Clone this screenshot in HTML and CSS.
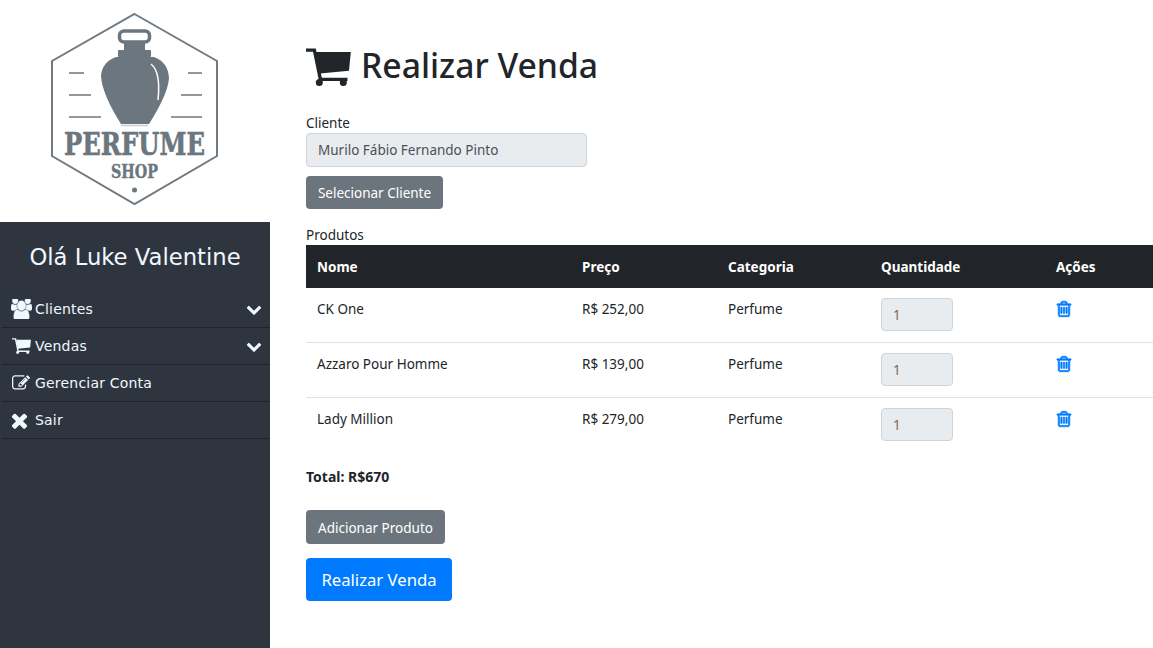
FILE: index.html
```html
<!DOCTYPE html>
<html lang="pt-BR">
<head>
<meta charset="utf-8">
<title>Realizar Venda</title>
<link rel="stylesheet" href="styles.css">
</head>
<body>
<svg class="defs" width="0" height="0" aria-hidden="true">
  <symbol id="i-cart" viewBox="0 0 45 38" preserveAspectRatio="none"><path d="M0 .5H9.800L15.800 29.700H41.500V33H13L7 3.700H0Z"/><path d="M10 4H44.800L43 22.700L14 25.500Z"/><circle cx="13.300" cy="34.500" r="3.500"/><circle cx="37.300" cy="34.500" r="3.500"/></symbol>
  <symbol id="i-users" viewBox="0 120 1920 1560" preserveAspectRatio="none"><path d="M593 896q-162 5-265 128h-134q-82 0-138-40.500t-56-118.500q0-353 124-353 6 0 43.500 21t97.500 42.500 119 21.500q67 0 133-23-5 37-5 66 0 139 81 256zm1071 637q0 120-73 189.500t-194 69.500h-874q-121 0-194-69.500t-73-189.500q0-53 3.500-103.500t14-109 26.500-108.500 43-97.500 62-81 85.500-53.500 111.500-20q10 0 43 21.500t73 48 107 48 135 21.500 135-21.500 107-48 73-48 43-21.500q61 0 111.500 20t85.500 53.500 62 81 43 97.500 26.500 108.500 14 109 3.500 103.500zm-1024-1277q0 106-75 181t-181 75-181-75-75-181 75-181 181-75 181 75 75 181zm704 384q0 159-112.500 271.500t-271.500 112.500-271.500-112.500-112.500-271.500 112.500-271.500 271.500-112.500 271.500 112.500 112.500 271.500zm576 225q0 78-56 118.500t-138 40.500h-134q-103-123-265-128 81-117 81-256 0-29-5-66 66 23 133 23 59 0 119-21.500t97.500-42.500 43.500-21q124 0 124 353zm-128-609q0 106-75 181t-181 75-181-75-75-181 75-181 181-75 181 75 75 181z"/></symbol>
  <symbol id="i-edit" viewBox="0 0 1792 1792"><path d="M888 1184l116-116-152-152-116 116v56h96v96h56zm440-720q-16-16-33 1l-350 350q-17 17-1 33t33-1l350-350q17-17 1-33zm80 594v190q0 119-84.500 203.500t-203.500 84.500h-832q-119 0-203.500-84.500t-84.500-203.500v-832q0-119 84.500-203.500t203.500-84.500h832q63 0 117 25 15 7 18 23 3 17-9 29l-49 49q-14 14-32 8-23-6-45-6h-832q-66 0-113 47t-47 113v832q0 66 47 113t113 47h832q66 0 113-47t47-113v-126q0-13 9-22l64-64q15-15 35-7t20 29zm-96-738l288 288-672 672h-288v-288zm444 132l-92 92-288-288 92-92q28-28 68-28t68 28l152 152q28 28 28 68t-28 68z"/></symbol>
  <symbol id="i-times" viewBox="0 0 1792 1792"><path d="M1490 1322q0 40-28 68l-136 136q-28 28-68 28t-68-28l-294-294-294 294q-28 28-68 28t-68-28l-136-136q-28-28-28-68t28-68l294-294-294-294q-28-28-28-68t28-68l136-136q28-28 68-28t68 28l294 294 294-294q28-28 68-28t68 28l136 136q28 28 28 68t-28 68l-294 294 294 294q28 28 28 68z"/></symbol>
  <symbol id="i-chev" viewBox="0 0 1792 1792"><path d="M1683 808l-742 741q-19 19-45 19t-45-19l-742-741q-19-19-19-45.500t19-45.500l166-165q19-19 45-19t45 19l531 531 531-531q19-19 45-19t45 19l166 165q19 19 19 45.500t-19 45.500z"/></symbol>
  <symbol id="i-trash" viewBox="0 0 1792 1792"><path d="M704 736v576q0 14-9 23t-23 9h-64q-14 0-23-9t-9-23v-576q0-14 9-23t23-9h64q14 0 23 9t9 23zm256 0v576q0 14-9 23t-23 9h-64q-14 0-23-9t-9-23v-576q0-14 9-23t23-9h64q14 0 23 9t9 23zm256 0v576q0 14-9 23t-23 9h-64q-14 0-23-9t-9-23v-576q0-14 9-23t23-9h64q14 0 23 9t9 23zm128 724v-948h-896v948q0 22 7 40.500t14.500 27 10.500 8.500h832q3 0 10.500-8.500t14.500-27 7-40.500zm-672-1076h448l-48-117q-7-9-17-11h-317q-10 2-17 11zm928 32v64q0 14-9 23t-23 9h-96v948q0 83-47 143.500t-113 60.500h-832q-66 0-113-58.500t-47-141.500v-952h-96q-14 0-23-9t-9-23v-64q0-14 9-23t23-9h309l70-167q15-37 54-63t79-26h320q40 0 79 26t54 63l70 167h309q14 0 23 9t9 23z"/></symbol>
</svg>

<div class="layout">
  <aside class="sidebar">
    <div class="logo-box">
      <svg class="logo" viewBox="0 0 270 222" width="270" height="222" role="img" aria-label="Perfume Shop">
        <polygon class="logo-line" points="134.500,14 217,61 217,156 134.500,204 52,156 52,61"/>
        <rect class="logo-ring" x="119.500" y="31" width="30" height="11" rx="4.500"/>
        <rect class="logo-fill" x="124" y="43" width="21" height="8"/>
        <rect class="logo-fill" x="118" y="50" width="33" height="7" rx="1"/>
        <path class="logo-fill" d="M116 57 L154 57 Q168 62 169 78 Q168 94 149 124 L121 124 Q102 94 101 76 Q102 62 116 57 Z"/>
        <path class="logo-gleam" d="M151 64 Q161 72 158 100"/>
        <path class="logo-shadow" d="M121 125.500 L148 125.500"/>
        <path class="logo-bar" d="M69 73 H84 M188 73 H202 M69 95 H91 M181 95 H202 M69 117 H101 M171 117 H202"/>
        <text class="logo-name" x="64" y="155" textLength="141" lengthAdjust="spacingAndGlyphs">PERFUME</text>
        <text class="logo-sub" x="111" y="178" textLength="47" lengthAdjust="spacingAndGlyphs">SHOP</text>
        <circle class="logo-fill" cx="134.500" cy="190" r="2.500"/>
      </svg>
    </div>
    <div class="side-panel">
      <h2 class="greeting">Olá Luke Valentine</h2>
      <nav class="menu">
        <a class="menu-item" href="#"><svg class="mi mi-users"><use href="#i-users"/></svg><span class="mi-label">Clientes</span><svg class="chev"><use href="#i-chev"/></svg></a>
        <a class="menu-item" href="#"><svg class="mi mi-cart"><use href="#i-cart"/></svg><span class="mi-label">Vendas</span><svg class="chev"><use href="#i-chev"/></svg></a>
        <a class="menu-item" href="#"><svg class="mi"><use href="#i-edit"/></svg><span class="mi-label">Gerenciar Conta</span></a>
        <a class="menu-item" href="#"><svg class="mi mi-times"><use href="#i-times"/></svg><span class="mi-label">Sair</span></a>
      </nav>
    </div>
  </aside>

  <main class="content">
    <h1 class="title"><svg class="title-icon"><use href="#i-cart"/></svg>Realizar Venda</h1>
    <label class="field-label" for="cliente">Cliente</label>
    <input class="control control-client" id="cliente" value="Murilo Fábio Fernando Pinto" readonly>
    <button class="btn btn-select" type="button">Selecionar Cliente</button>
    <div class="field-label label-products">Produtos</div>
    <table class="table">
      <colgroup>
        <col class="c1"><col class="c2"><col class="c3"><col class="c4"><col class="c5">
      </colgroup>
      <thead>
        <tr><th>Nome</th><th>Preço</th><th>Categoria</th><th>Quantidade</th><th>Ações</th></tr>
      </thead>
      <tbody>
        <tr><td>CK One</td><td>R$ 252,00</td><td>Perfume</td><td><input class="control control-qty" value="1" readonly></td><td><a class="trash" href="#"><svg class="trash-icon"><use href="#i-trash"/></svg></a></td></tr>
        <tr><td>Azzaro Pour Homme</td><td>R$ 139,00</td><td>Perfume</td><td><input class="control control-qty" value="1" readonly></td><td><a class="trash" href="#"><svg class="trash-icon"><use href="#i-trash"/></svg></a></td></tr>
        <tr><td>Lady Million</td><td>R$ 279,00</td><td>Perfume</td><td><input class="control control-qty" value="1" readonly></td><td><a class="trash" href="#"><svg class="trash-icon"><use href="#i-trash"/></svg></a></td></tr>
      </tbody>
    </table>
    <p class="total">Total: R$670</p>
    <button class="btn btn-add" type="button">Adicionar Produto</button>
    <button class="btn btn-primary" type="button">Realizar Venda</button>
  </main>
</div>
</body>
</html>
```
FILE: styles.css
```css
* { box-sizing: border-box; }
html, body { margin: 0; height: 100%; }
body {
  font-family: "Noto Sans", "Open Sans", sans-serif;
  font-size: 13.5px;
  line-height: 21px;
  color: #212529;
  background: #fff;
  overflow: hidden;
}
.defs { display: block; height: 0; }
.layout { display: flex; height: 648px; }

/* Sidebar */
.sidebar { width: 270px; flex: none; display: flex; flex-direction: column; }
.logo-box { height: 222px; flex: none; }
.logo { display: block; }
.logo-line { fill: none; stroke: #707a82; stroke-width: 2; }
.logo-ring { fill: none; stroke: #6c767e; stroke-width: 3.500; }
.logo-fill { fill: #6c767e; }
.logo-gleam { fill: none; stroke: #fff; stroke-width: 1.500; }
.logo-shadow { fill: none; stroke: #c9ced2; stroke-width: 1.500; }
.logo-bar { fill: none; stroke: #6c767e; stroke-width: 1.600; }
.logo-name { font-family: "DejaVu Serif", serif; font-weight: 700; font-size: 31px; fill: #6c767e; stroke: #6c767e; stroke-width: .6; }
.logo-sub { font-family: "DejaVu Serif", serif; font-weight: 700; font-size: 18px; fill: #6c767e; stroke: #6c767e; stroke-width: .4; }

.side-panel {
  flex: 1;
  background: #2f353e;
  color: #f0f8ff;
  font-family: "DejaVu Sans", Verdana, sans-serif;
  padding-left: 2px;
}
.greeting {
  margin: 0;
  padding: 21px 2px 20px 0;
  text-align: center;
  font-size: 22.700px;
  font-weight: 400;
  line-height: 28px;
}
.menu { display: flex; flex-direction: column; }
.menu-item {
  display: flex;
  align-items: center;
  height: 37px;
  padding: 0 8px 0 9px;
  color: #f0f8ff;
  text-decoration: none;
  font-size: 14px;
  letter-spacing: .2px;
  border-bottom: 1px solid #21252b;
}
.mi { width: 20px; height: 18px; fill: #f0f8ff; flex: none; margin-right: 4px; }
.mi-users { width: 21px; height: 20px; margin-right: 3px; stroke: #f0f8ff; stroke-width: 40; }
.mi-cart { width: 19px; height: 16px; margin-left: 1px; margin-right: 4px; }
.mi-times { width: 23px; height: 23px; margin-left: -3px; }
.mi-label { flex: 1; }
.chev { width: 16px; height: 16px; fill: #f0f8ff; flex: none; }

/* Main */
.content { flex: 1; min-width: 0; padding: 44px 0 0 36px; display: flex; flex-direction: column; align-items: flex-start; }
.title {
  margin: 0 0 26px;
  font-size: 33.700px;
  font-weight: 500;
  line-height: 43px;
  display: flex;
  align-items: flex-start;
}
.title-icon { width: 45px; height: 38px; fill: #212529; margin: 4px 10px 0 0; flex: none; }
.field-label { display: block; height: 20px; }
.label-products { margin-top: 16px; height: 21px; }
.control {
  font: inherit;
  color: #495057;
  background: #e9ecef;
  border: 1px solid #ced4da;
  border-radius: 4px;
  padding: 0 11px;
  outline: none;
}
.control-client { width: 281px; height: 34px; }
.control-qty { display: block; width: 72px; height: 33px; margin-top: -1px; color: #80684f; }
.btn {
  font: inherit;
  color: #fff;
  background: #6c757d;
  border: 0;
  border-radius: 4px;
  padding: 0;
  white-space: nowrap;
  cursor: pointer;
}
.btn-select { margin-top: 9px; width: 137px; height: 33px; padding-top: 2px; }
.btn-add { width: 139px; height: 34px; padding-top: 2px; }
.btn-primary { margin-top: 14px; width: 146px; height: 43px; background: #007bff; font-size: 16.700px; }

/* Table */
.table { width: 847px; flex: none; border-collapse: separate; border-spacing: 0; table-layout: fixed; margin-top: -1px; }
.c1 { width: 265px; } .c2 { width: 146px; } .c3 { width: 153px; } .c4 { width: 175px; } .c5 { width: 108px; }
.table th {
  background: #212529;
  color: #fff;
  text-align: left;
  font-weight: 700;
  height: 43px;
  padding: 2px 11px 0;
}
.table td { height: 55px; padding: 11px 11px 10px; vertical-align: top; border-bottom: 1px solid #dee2e6; }
.table tr:last-child td { border-bottom: 0; }
.trash { display: block; height: 19px; margin-left: -1px; margin-top: 1px; }
.trash-icon { display: block; width: 18px; height: 18px; fill: #007bff; stroke: #007bff; stroke-width: 70; }
.total { margin: 13px 0 23px; font-size: 14px; font-weight: 700; line-height: 21px; }
```
